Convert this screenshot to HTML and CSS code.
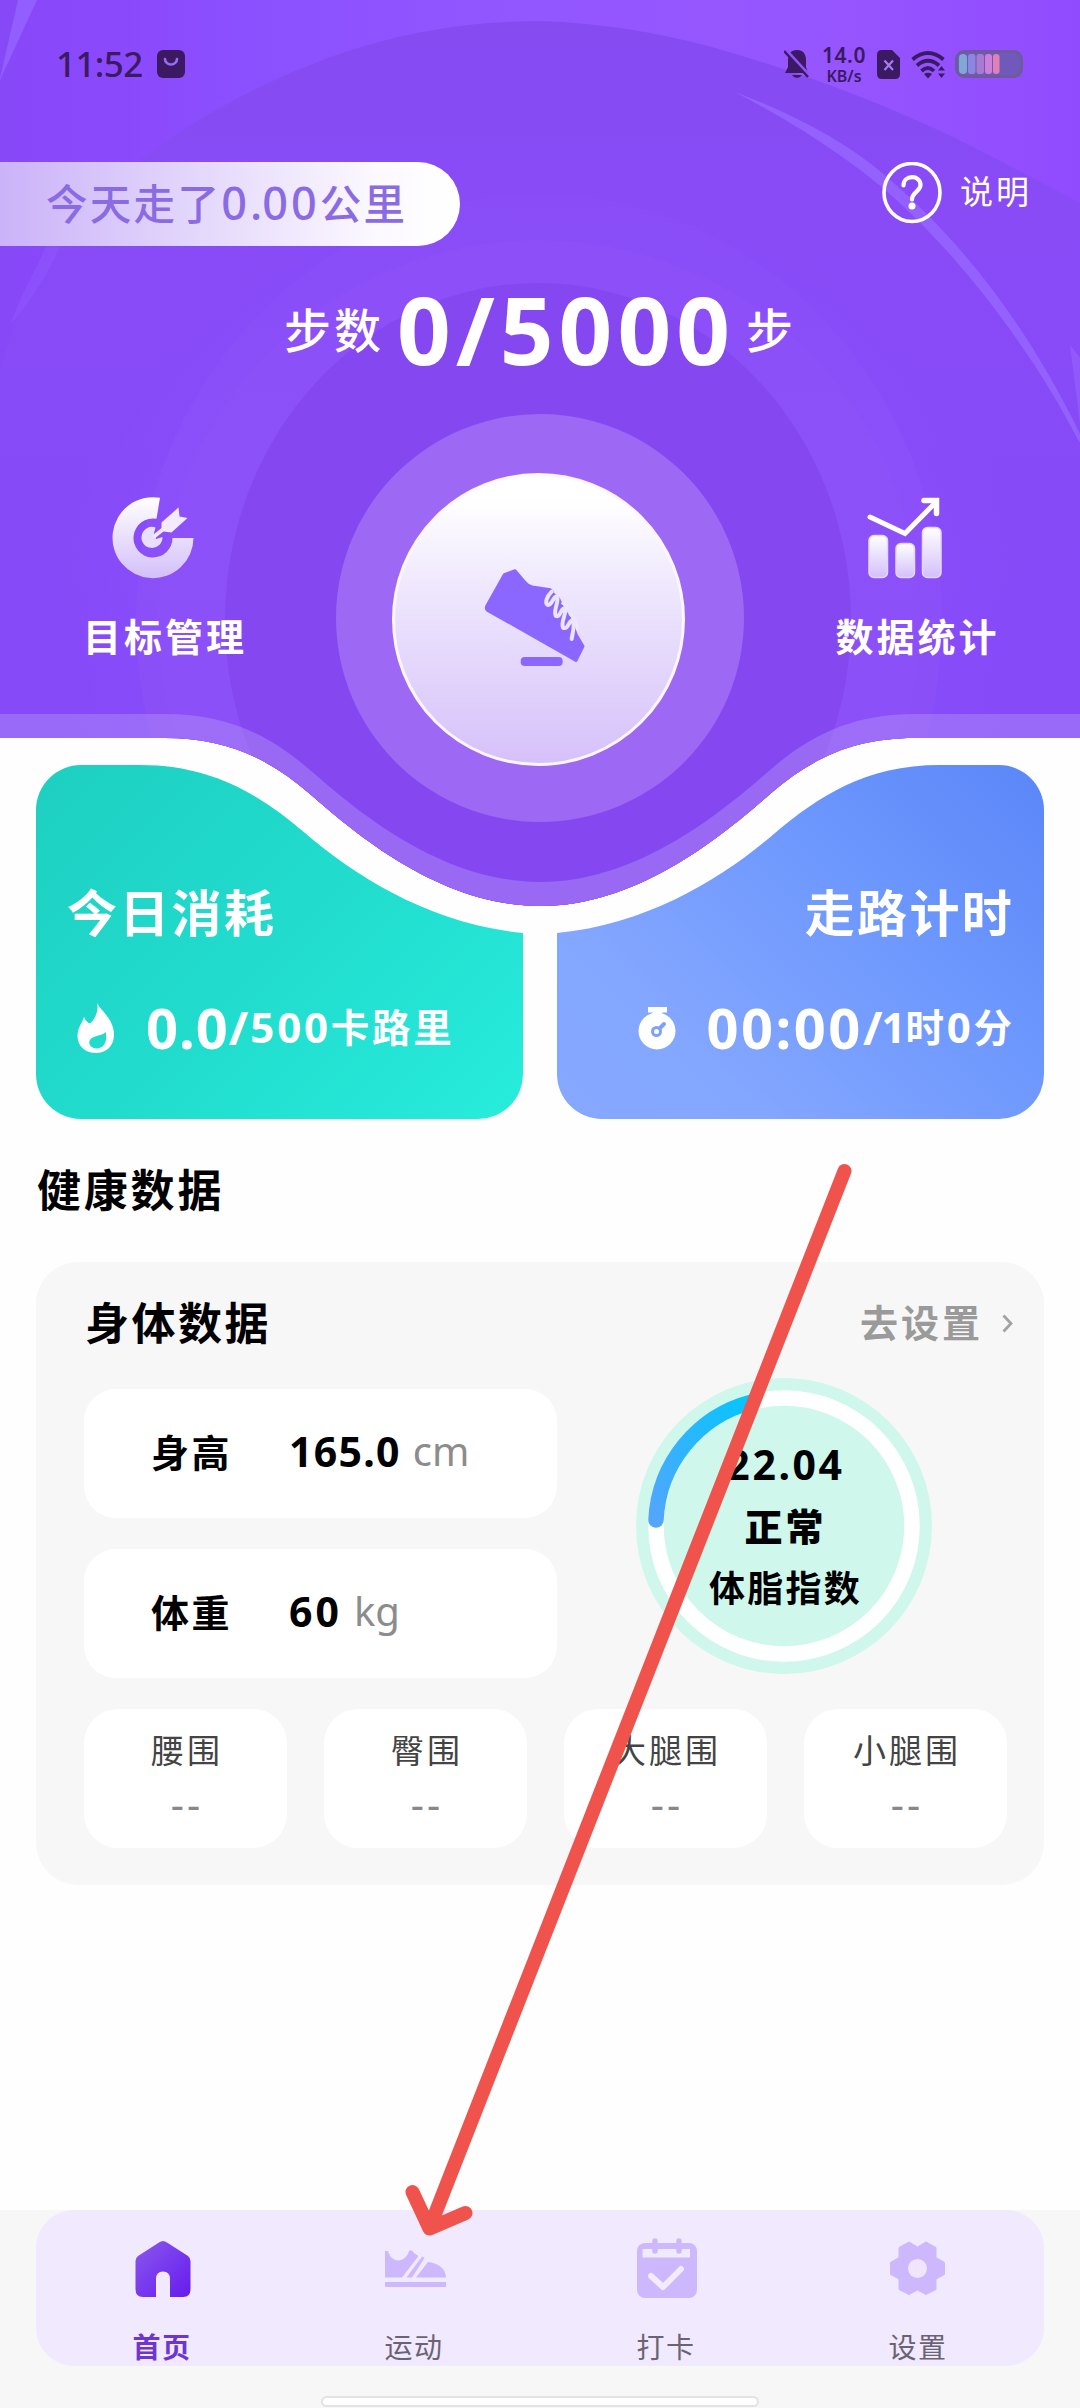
FILE: index.html
```html
<!DOCTYPE html>
<html lang="zh-CN">
<head>
<meta charset="utf-8">
<title>步数</title>
<link rel="stylesheet" href="styles.css">
</head>
<body>
<div class="screen">
  <header class="hero">
    <svg class="hero-bg" width="1080" height="910" viewBox="0 0 1080 910">
      <defs>
        <linearGradient id="sky" x1="0" y1="0" x2="1" y2="0">
          <stop offset="0" stop-color="#8748f8"/><stop offset=".12" stop-color="#8b49fc"/><stop offset=".24" stop-color="#8b51ff"/><stop offset=".5" stop-color="#9357ff"/><stop offset=".75" stop-color="#9656ff"/><stop offset="1" stop-color="#914bff"/>
        </linearGradient>
        <linearGradient id="dome" x1="0" y1="0" x2="0" y2="1">
          <stop offset="0" stop-color="#864bf1"/><stop offset=".2" stop-color="#884bf6"/><stop offset="1" stop-color="#8549f9"/>
        </linearGradient>
        <linearGradient id="ring1" x1="0" y1="0" x2="0" y2="1">
          <stop offset="0" stop-color="#8b4ef7" stop-opacity=".4"/><stop offset=".3" stop-color="#8b50f9"/><stop offset="1" stop-color="#8a4df6"/>
        </linearGradient>
        <radialGradient id="glow"><stop offset=".8" stop-color="#8b52ff" stop-opacity=".3"/><stop offset="1" stop-color="#8b52ff" stop-opacity="0"/></radialGradient>
        <clipPath id="wave">
          <path d="M0 0H1080V738H915C855 738 813 757 770 794C722 836 638 906 540 906C442 906 358 836 310 794C267 757 225 738 165 738H0Z"/>
        </clipPath>
      </defs>
      <g clip-path="url(#wave)">
        <rect width="1080" height="910" fill="url(#sky)"/>
        <path d="M-10 420C15 280 70 200 155 150C213 105 300 65 361 47C420 29 480 21 540 21C600 23 650 31 712 47C800 72 880 102 953 137C1000 160 1045 185 1090 208V910H-10Z" fill="url(#dome)"/>
        <path d="M0 78L18 0H37L0 80Z" fill="#925eff"/>
        <path d="M10 325C25 285 40 262 46 246H60C48 275 28 305 10 325Z" fill="#9258ff" opacity=".45"/>
        <path d="M735 92C790 113 845 140 888 178C960 240 1030 325 1090 455L1078 440C1040 365 975 275 912 215C868 170 800 126 735 92Z" fill="#9461ff"/>
        <path d="M1070 345L1082 440V360Z" fill="#9863ff" opacity=".6"/>
        <ellipse cx="540" cy="620" rx="480" ry="440" fill="url(#glow)"/>
        <ellipse cx="539" cy="620" rx="403" ry="425" fill="url(#ring1)"/>
        <ellipse cx="539" cy="620" rx="381" ry="380" fill="#8e52fa" opacity=".35"/>
        <ellipse cx="538" cy="620" rx="313" ry="337" fill="#8548f0"/>
        <path d="M0 714H165C225 714 267 733 310 770C358 812 442 882 540 882C638 882 722 812 770 770C813 733 855 714 915 714H1080V910H0Z" fill="#bda4fa" opacity=".36"/>
      </g>
    </svg>

    <div class="status">
      <span class="clock">11:52</span>
      <svg class="status-app" width="28" height="28" viewBox="0 0 28 28"><rect width="28" height="28" rx="6" fill="#3b1a63"/><path d="M8 9a6 5.500 0 0 0 12 0" fill="none" stroke="#9a6cf0" stroke-width="2.600" stroke-linecap="round"/></svg>
      <span class="grow"></span>
      <svg width="26" height="30" viewBox="0 0 26 30"><path d="M13 1C7 1 4 5 4 11V18L1 24H24L22 18V11C22 5 19 1 13 1Z" fill="#3b1a63"/><path d="M8 26H18Q16 29 13 29T8 26Z" fill="#3b1a63"/><path d="M2 1L26 27" stroke="#9154fb" stroke-width="3"/><path d="M0 2L24 28" stroke="#3b1a63" stroke-width="2.500"/></svg>
      <span class="speed"><b>14.0</b><i>KB/s</i></span>
      <svg width="24" height="29" viewBox="0 0 24 29"><path d="M5 0H15L23 8V24Q23 29 18 29H5Q0 29 0 24V5Q0 0 5 0Z" fill="#3b1a63"/><path d="M7.500 10.500L16 20M16 10.500L7.500 20" stroke="#a57bf0" stroke-width="2.200"/></svg>
      <svg class="wifi" width="35" height="29" viewBox="0 0 35 29"><g fill="none" stroke="#3b1a63" stroke-width="3.800"><path d="M1.500 9.500Q17 -3.500 32.500 9.500"/><path d="M6 15.500Q17 6 28 15.500"/><path d="M10.500 21Q17 15 23 21"/></g><path d="M13 24Q17 21.500 21 24L17 28.500Z" fill="#3b1a63"/><path d="M27 20.500L30.500 16L34 20.500ZM27 23.500H34L30.500 28Z" fill="#3b1a63"/></svg>
      <svg class="battery" width="68" height="28" viewBox="0 0 68 28"><rect x="1.500" y="1.500" width="65" height="25" rx="8" fill="#7059ba" stroke="#6e5a9c" stroke-width="3"/><rect x="4" y="4" width="8" height="20" rx="4" fill="#80a8d4"/><rect x="13" y="4" width="7.500" height="20" rx="3" fill="#8d86e0"/><rect x="21.500" y="4" width="7.500" height="20" rx="3" fill="#a77bd0"/><rect x="30" y="4" width="7" height="20" rx="3" fill="#cc80d8"/><rect x="38" y="4" width="6.500" height="20" rx="3" fill="#e080b4"/></svg>
    </div>

    <div class="top-row">
      <div class="distance">今天走了<span class="distance-num">0<span class="dot">.</span>00</span>公里</div>
      <div class="help">
        <svg width="60" height="62" viewBox="0 0 60 62"><ellipse cx="30" cy="30.500" rx="28" ry="29" fill="none" stroke="#fff" stroke-width="3.600"/><path d="M21.500 23.500C21.500 12.500 38.500 12.500 38.500 23C38.500 29.500 30 30 30 37.500" fill="none" stroke="#fff" stroke-width="4.200" stroke-linecap="round"/><circle cx="30" cy="44" r="3.500" fill="#fff"/></svg>
        <span>说明</span>
      </div>
    </div>

    <div class="steps"><span>步数</span><strong>0/5000</strong><span>步</span></div>

    <div class="features">
      <div class="feature feature-left">
        <svg width="82" height="82" viewBox="0 0 82 82">
          <defs><linearGradient id="fade" x1="0" y1="0" x2="0" y2="1"><stop offset="0" stop-color="#fff"/><stop offset="1" stop-color="#d3bffa"/></linearGradient></defs>
          <path d="M48 0.800A40.500 40.500 0 1 0 81.500 41H60.500A19.500 19.500 0 1 1 44.500 21.800Z" fill="url(#fade)"/>
          <path d="M43.500 30.500A10.500 10.500 0 1 0 50.500 40L44 42L42 36Z" fill="#e9dffc"/>
          <path d="M41.500 40L52 31.500" stroke="#f0e8ff" stroke-width="4"/>
          <path d="M49.500 34V25.500L66.500 10.500L67.500 19.500L75.500 21L59.500 35.500L51.500 34.500Z" fill="#f2ebff"/>
        </svg>
        <span>目标管理</span>
      </div>
      <div class="step-ring"><div class="step-disc">
        <svg width="120" height="120" viewBox="0 0 360 360">
          <path d="M88 47L120 35L148 68Q156 80 172 84L226 92L250 118L268 154L290 188L304 228L324 262L303 304L38 154Q32 149 35 142Z" fill="#8b67ff" stroke="#8b67ff" stroke-width="9" stroke-linejoin="round"/>
          <path d="M230 98C213 114 210 134 218 138C232 138 234 112 246 112C254 126 234 152 242 170C256 178 256 150 268 148C278 162 256 186 264 206C280 214 280 186 292 184C302 198 292 222 290 240" fill="none" stroke="#ece3fc" stroke-width="12" stroke-linecap="round" stroke-linejoin="round"/>
          <path d="M238 96L258 112M260 130L280 146M284 164L302 182L308 214" stroke="#efe8fd" stroke-width="9" fill="none"/>
          <rect x="137" y="294" width="126" height="27" rx="12" fill="#8b67ff"/>
        </svg>
      </div></div>
      <div class="feature feature-right">
        <svg width="76" height="82" viewBox="0 0 76 82">
          <g fill="url(#fade)" stroke="#e4d6fd" stroke-width="1.500"><rect x="2" y="38.500" width="18.500" height="42" rx="5"/><rect x="29" y="46.500" width="18.500" height="34" rx="5"/><rect x="55.500" y="30.500" width="18.500" height="50" rx="5"/></g>
          <path d="M3 20L38 36.500L69 5" fill="none" stroke="#fff" stroke-width="5" stroke-linecap="round"/>
          <path d="M57 3.500H69.500V16.500" fill="none" stroke="#fff" stroke-width="5.500" stroke-linecap="round"/>
        </svg>
        <span>数据统计</span>
      </div>
    </div>
  </header>

  <section class="cards">
    <article class="card card-calories">
      <h2>今日消耗</h2>
      <div class="metric">
        <svg class="flame" width="38" height="50" viewBox="0 0 38 50"><path d="M20 0C24 8 37 16 37 32C37 43 29 50 19 50C8 50 0.500 43 0.500 33C0.500 25 5 20 7 14C9 18 10.500 20 13 20.500C18 16 22 8 20 0Z" fill="#fff"/><path d="M29 29C24 34 11 32 12.500 41C14 46 22 47 26 43C30 39 29 34 29 29Z" fill="#21dccc"/></svg>
        <b class="big calories-now">0.0</b><b class="slash">/</b><b class="small">500</b><span class="unit">卡路里</span>
      </div>
    </article>
    <article class="card card-timer">
      <h2>走路计时</h2>
      <div class="metric">
        <svg class="stopwatch" width="38" height="43" viewBox="0 0 38 43"><path d="M10 0H29V5.500H24V8H15V5.500H10Z" fill="#fff"/><circle cx="19" cy="24" r="18.500" fill="#fff"/><path d="M18.500 24.500L26 17" stroke="#7ba2fe" stroke-width="4" stroke-linecap="round"/><circle cx="18.500" cy="24.500" r="4" fill="#fff" stroke="#7ba2fe" stroke-width="3"/></svg>
        <b class="big">00:00</b><b class="slash">/</b><b class="small one">1</b><span class="unit">时</span><b class="small">0</b><span class="unit last">分</span>
      </div>
    </article>
  </section>

  <h1 class="section-title">健康数据</h1>

  <section class="body-card">
    <div class="body-head">
      <h3>身体数据</h3>
      <a class="more">去设置<svg width="11" height="19" viewBox="0 0 11 19"><path d="M1.500 1.500L9 9.500L1.500 17.500" fill="none" stroke="#a3a3a3" stroke-width="2.800"/></svg></a>
    </div>
    <div class="body-main">
      <div class="body-rows">
        <div class="row"><span class="row-name">身高</span><b class="height-value">165.0</b><i>cm</i></div>
        <div class="row"><span class="row-name">体重</span><b>60</b><i>kg</i></div>
      </div>
      <div class="gauge">
        <svg class="gauge-bg" width="298" height="298" viewBox="0 0 298 298">
          <defs><linearGradient id="arc" x1="0" y1="1" x2="1" y2="0"><stop offset="0" stop-color="#52a6fc"/><stop offset="1" stop-color="#04c6ff"/></linearGradient></defs>
          <circle cx="149" cy="149" r="148" fill="#cff7ec"/>
          <circle cx="149" cy="149" r="128" fill="none" stroke="#fff" stroke-width="15.500"/>
          <path d="M21 143A128 128 0 0 1 117 25" fill="none" stroke="url(#arc)" stroke-width="15.500" stroke-linecap="round"/>
        </svg>
        <b>22.04</b><strong>正常</strong><em>体脂指数</em>
      </div>
    </div>
    <div class="sizes">
      <div class="size"><span>腰围</span><i>--</i></div>
      <div class="size"><span>臀围</span><i>--</i></div>
      <div class="size"><span>大腿围</span><i>--</i></div>
      <div class="size"><span>小腿围</span><i>--</i></div>
    </div>
  </section>

  <footer class="bottom">
    <nav class="tabs">
      <a class="tab active"><svg width="64" height="64" viewBox="0 0 64 64"><defs><linearGradient id="home" x1="0" y1="0" x2="1" y2="1"><stop offset="0" stop-color="#8a58ee"/><stop offset="1" stop-color="#661bed"/></linearGradient></defs><path d="M28 5.500Q32 2.500 36 5.500L57 19Q59.500 21 59.500 24V52Q59.500 60 52 60H39V42Q39 34.500 32 34.500Q25 34.500 25 42V60H12Q4.500 60 4.500 52V24Q4.500 21 7 19Z" fill="url(#home)"/></svg><span>首页</span></a>
      <a class="tab"><svg width="64" height="64" viewBox="0 0 64 64"><g fill="#cdb8fe"><path d="M2 14H5C8 26 22 27 26 14Q29 12 31 16L35.500 19L19 40.500H2Z"/><path d="M36.500 23L39.500 19.500L41.500 21L29 40.500H23.500Z"/><path d="M33 40.500L45 25C54 26 63 31 63 40.500Z"/><rect x="2" y="45" width="61" height="5"/></g></svg><span>运动</span></a>
      <a class="tab tab-shift"><svg width="64" height="64" viewBox="0 0 64 64"><rect x="4" y="6" width="60" height="55" rx="8" fill="#cdb8fe"/><path d="M9.500 12H57V20.500H9.500Z" fill="#f1e9fe"/><path d="M22 4V14M46 4V14" stroke="#cdb8fe" stroke-width="5.500" stroke-linecap="round"/><path d="M18 39L30 50L48 32" fill="none" stroke="#f3ebff" stroke-width="6" stroke-linecap="round" stroke-linejoin="round"/></svg><span>打卡</span></a>
      <a class="tab tab-shift"><svg width="64" height="64" viewBox="0 0 64 64"><path d="M24 5L32.500 10L41 5L51 10.500V20.500L59.500 25.500V37.500L51 42V52.500L41 57.500L32.500 53L24 57.500L14 52.500V42L5.500 37.500V25.500L14 20.500V10.500Z" fill="#cdb8fe" stroke="#cdb8fe" stroke-width="1" stroke-linejoin="round"/><circle cx="32.500" cy="31.500" r="9.500" fill="#f1e4fe"/></svg><span>设置</span></a>
    </nav>
    <div class="home-bar"></div>
  </footer>

  <svg class="pointer" width="1080" height="2408" viewBox="0 0 1080 2408"><path d="M844.500 1171L429.500 2228M412.500 2192L429.500 2228.500L465.500 2213" fill="none" stroke="#f0534b" stroke-width="14" stroke-linecap="round" stroke-linejoin="round"/></svg>
</div>
</body>
</html>
```
FILE: styles.css
```css
* { box-sizing: border-box; }

body {
  margin: 0;
  background: #fff;
  font-family: "Noto Sans CJK SC", sans-serif;
}

h1, h2, h3 { margin: 0; }
i, em { font-style: normal; }
svg { display: block; flex: none; }

.screen {
  position: relative;
  width: 1080px;
  height: 2408px;
  overflow: hidden;
  display: flex;
  flex-direction: column;
  background: #fefefe;
}

/* hero */
.hero {
  position: relative;
  height: 765px;
  flex: none;
  color: #fff;
}
.hero > * { position: relative; }
.hero > .hero-bg { position: absolute; left: 0; top: 0; }

.status {
  display: flex;
  align-items: center;
  height: 128px;
  padding: 0 57px 0 56px;
  color: #3b1a63;
  font-family: "Noto Sans", sans-serif;
}
.clock { font-size: 35px; font-weight: 500; letter-spacing: -0.6px; width: 101px; line-height: 40px; }
.grow { flex: 1; }
.speed {
  display: flex;
  flex-direction: column;
  align-items: center;
  width: 46px;
  margin: 2px 10px 0 11px;
  font-weight: 600;
}
.speed b { font-size: 21px; line-height: 21px; font-weight: 600; letter-spacing: 0.5px; }
.speed i { font-size: 16px; line-height: 20px; }
.wifi { margin: 0 9px 0 10px; }

.top-row {
  display: flex;
  justify-content: space-between;
  align-items: flex-start;
  margin-top: 34px;
  padding-right: 48px;
}
.distance {
  width: 460px;
  height: 84px;
  padding-left: 46px;
  border-radius: 0 42px 42px 0;
  background: linear-gradient(90deg, #cbb3f9, #e2d5fb 40%, #fcf9ff 82%, #fff);
  color: #8a6be4;
  font-size: 41.500px;
  font-weight: 500;
  line-height: 80px;
  letter-spacing: 2.300px;
  white-space: nowrap;
}
.distance-num { font-family: "Noto Sans", sans-serif; font-size: 45px; letter-spacing: 3px; }
.distance-num .dot { letter-spacing: 0; }
.help { display: flex; align-items: center; gap: 18px; font-size: 33px; letter-spacing: 3px; line-height: 56px; }
.help span { height: 62px; }

.steps {
  display: flex;
  justify-content: center;
  align-items: center;
  height: 100px;
  margin-top: 33px;
  font-size: 47px;
  font-weight: 500;
  letter-spacing: 3px;
}
.steps span { line-height: 97px; height: 100px; }
.steps strong {
  margin: 0 11px 0 13px;
  font: 700 94px/94px "Noto Sans", sans-serif;
  letter-spacing: 5px;
}

.features {
  display: grid;
  grid-template-columns: 336px 408px 336px;
  align-items: start;
  margin-top: 35px;
}
.feature {
  display: flex;
  flex-direction: column;
  align-items: center;
  padding-top: 83px;
  font-size: 38px;
  font-weight: 700;
  letter-spacing: 3px;
  line-height: 40px;
}
.feature svg { margin-bottom: 36px; }
.feature-left { padding-right: 6px; }
.feature-left svg { margin-left: -25px; }
.feature-right { padding-left: 11px; }
.feature-right svg { margin-left: -26px; }
.step-ring {
  width: 408px;
  height: 408px;
  display: grid;
  place-items: center;
  border-radius: 50%;
  background: #9d68f4;
}
.step-disc {
  width: 293px;
  height: 293px;
  margin: 2px 3px 0 0;
  padding-right: 8px;
  display: grid;
  place-items: center;
  border: 3px solid #fdf6ff;
  border-radius: 50%;
  background: linear-gradient(#fff 8%, #efe8fd 38%, #d6c1fa);
}

/* cards */
.cards {
  display: flex;
  justify-content: space-between;
  height: 354px;
  padding: 0 36px;
  flex: none;
}
.card {
  width: 487px;
  color: #fff;
  padding: 120px 32px 0 31px;
}
.card h2 { font-size: 50px; font-weight: 700; letter-spacing: 2.300px; line-height: 50px; }
.card-calories {
  background: linear-gradient(135deg, #1dcfc1, #21dccd 50%, #27ecdc);
  clip-path: path("M45 0H104C179 0 226 32 269 68C319 111 394 159 487 168V309A45 45 0 0 1 442 354H45A45 45 0 0 1 0 309V45A45 45 0 0 1 45 0Z");
}
.card-timer {
  text-align: right;
  background: linear-gradient(225deg, #5b86f8, #6c97fd 35%, #83a6ff 75%, #86a8ff);
  clip-path: path("M442 0H383C308 0 261 32 218 68C168 111 93 159 0 168V309A45 45 0 0 0 45 354H442A45 45 0 0 0 487 309V45A45 45 0 0 0 442 0Z");
}
.card-timer h2 { margin-right: -2px; }
.metric {
  display: flex;
  align-items: center;
  height: 60px;
  margin-top: 62px;
  white-space: nowrap;
}
.card-timer .metric { justify-content: flex-end; }
.big { font: 700 56px/60px "Noto Sans", sans-serif; letter-spacing: 2.500px; }
.calories-now { letter-spacing: 1px; }
.slash { font: 700 47px/60px "Noto Sans", sans-serif; letter-spacing: 2px; }
.small { font: 700 42px/60px "Noto Sans", sans-serif; letter-spacing: 2.800px; }
.one { letter-spacing: 0; margin-left: -3px; }
.unit { font-size: 38.500px; font-weight: 700; line-height: 56px; height: 60px; letter-spacing: 2.700px; }
.last { letter-spacing: 0; }
.flame { margin: 2px 31px 0 10px; }
.stopwatch { margin: 2px 31px 0 0; }

.section-title {
  margin: 45px 0 0 37px;
  font-size: 44px;
  font-weight: 700;
  letter-spacing: 2.800px;
  line-height: 48px;
  color: #000;
}

/* body data */
.body-card {
  width: 1008px;
  height: 623px;
  margin: 50px 36px 0;
  padding: 0 37px 0 48px;
  border-radius: 42px;
  background: #f7f7f7;
  flex: none;
}
.body-head {
  display: flex;
  justify-content: space-between;
  align-items: center;
  height: 127px;
}
.body-head h3 { margin: -9px 0 0 1px; font-size: 44px; font-weight: 700; letter-spacing: 2.500px; line-height: 50px; color: #000; }
.more {
  display: flex;
  align-items: center;
  gap: 19px;
  margin: -9px -6px 0 0;
  color: #9a9a9a;
  font-size: 38px;
  font-weight: 700;
  letter-spacing: 3px;
  line-height: 50px;
}
.more svg { margin-top: 4px; }
.body-main { display: flex; height: 289px; }
.body-rows { display: flex; flex-direction: column; gap: 31px; width: 473px; }
.row {
  display: flex;
  align-items: center;
  height: 129px;
  padding: 0 0 6px 67px;
  border-radius: 32px;
  background: #fff;
  line-height: 50px;
  color: #000;
}
.row-name { width: 138px; font-size: 38px; font-weight: 700; letter-spacing: 2.500px; }
.row b { font: 700 41px/50px "Noto Sans", sans-serif; letter-spacing: 3px; }
.row .height-value { letter-spacing: 1.300px; }
.row i { margin-left: 12px; font: 400 40px/50px "Noto Sans", sans-serif; color: #8c8c8c; }
.gauge {
  position: relative;
  width: 298px;
  height: 298px;
  margin: -12px 0 0 78px;
  padding: 62px 0 0 3px;
  display: flex;
  flex-direction: column;
  align-items: center;
  gap: 11px;
  color: #000;
  font-weight: 700;
  line-height: 50px;
}
.gauge > * { position: relative; }
.gauge > .gauge-bg { position: absolute; left: 0; top: 0; }
.gauge b { font: 700 41px/50px "Noto Sans", sans-serif; letter-spacing: 2.600px; }
.gauge strong { font-size: 38px; letter-spacing: 3px; }
.gauge em { font-size: 36px; letter-spacing: 2.300px; }
.sizes {
  display: grid;
  grid-template-columns: repeat(4, 1fr);
  gap: 37px;
  margin-top: 31px;
}
.size {
  height: 139px;
  padding: 19px 0 0 3px;
  display: flex;
  flex-direction: column;
  align-items: center;
  gap: 13px;
  border-radius: 34px;
  background: #fff;
  line-height: 42px;
  color: #444;
  font-size: 33px;
  letter-spacing: 3px;
}
.size i { font: 400 41px/42px "Noto Sans", sans-serif; letter-spacing: 3px; color: #888; }

/* bottom navigation */
.bottom {
  height: 198px;
  margin-top: auto;
  flex: none;
  background: #f7f7f7;
}
.tabs {
  display: grid;
  grid-template-columns: repeat(4, 1fr);
  height: 156px;
  margin: 0 36px;
  border-radius: 38px;
  background: #f1e9fe;
}
.tab {
  display: flex;
  flex-direction: column;
  align-items: center;
  padding-top: 27px;
  color: #6a6373;
  font-size: 28px;
  letter-spacing: 1.500px;
  line-height: 36px;
}
.tab span { margin-top: 27px; }
.tab svg { margin-left: 2px; }
.tab-shift svg { margin-left: -2px; }
.tab.active { color: #6d35d2; font-weight: 700; }
.home-bar {
  width: 438px;
  height: 11px;
  margin: 30px auto 0;
  border: 2px solid #e3e3e3;
  border-radius: 6px;
  background: #fff;
}

/* hand-drawn arrow lying over the page */
.pointer { position: absolute; left: 0; top: 0; }
```
